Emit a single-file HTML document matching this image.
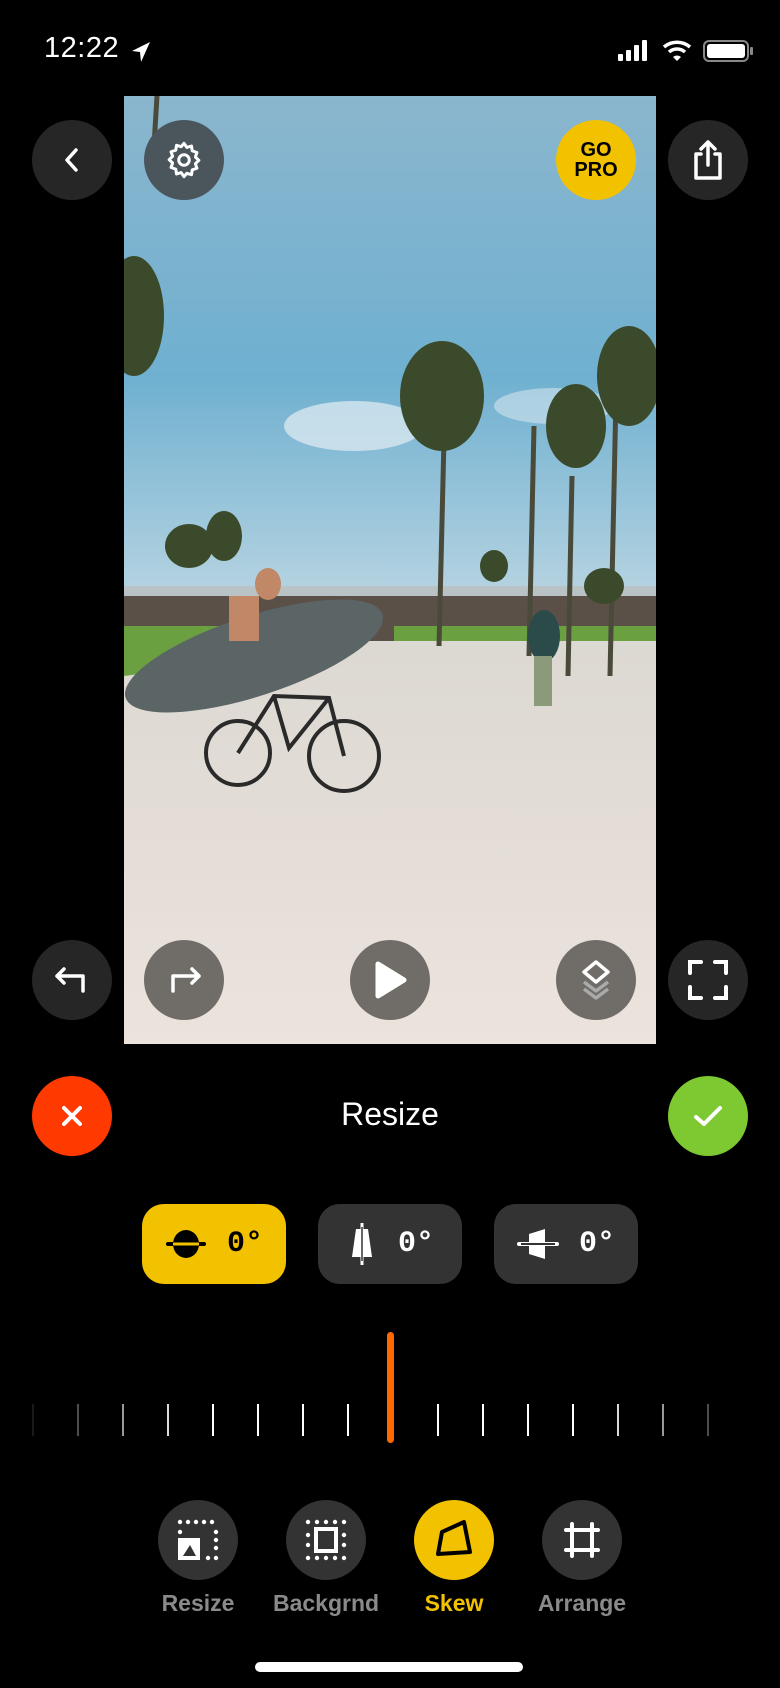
<!DOCTYPE html>
<html><head><meta charset="utf-8">
<style>
*{margin:0;padding:0;box-sizing:border-box}
body{width:780px;height:1688px;background:#000;position:relative;overflow:hidden;font-family:"Liberation Sans",sans-serif;color:#fff}
.abs{position:absolute}
.btn{position:absolute;width:80px;height:80px;border-radius:50%;display:flex;align-items:center;justify-content:center}
.dark{background:#262626}
.glass{background:rgba(70,70,70,.75)}
.pill{position:absolute;top:1204px;width:144px;height:80px;border-radius:22px;background:#333;display:flex;align-items:center;justify-content:center;gap:20px;font-family:"Liberation Mono",monospace;font-weight:bold;font-size:30px;color:#fff}
.tick{position:absolute;top:1404px;width:2px;height:32px;background:#fff}
.tool{position:absolute;top:1500px;width:80px;height:80px;border-radius:50%;background:#333;display:flex;align-items:center;justify-content:center}
.lbl{position:absolute;top:1590px;width:140px;text-align:center;font-size:23px;font-weight:bold;color:#8a8a8a}
</style></head><body>

<div class="abs" style="left:44px;top:32px;font-size:29px;font-weight:500;letter-spacing:0.5px">12:22</div>
<svg class="abs" style="left:130px;top:40px" width="22" height="24" viewBox="0 0 22 24"><path d="M20 2 L2 11 L10 12 L11 22 Z" fill="#fff"/></svg>
<svg class="abs" style="left:616px;top:38px" width="140" height="26" viewBox="0 0 140 26">
<rect x="2" y="16" width="5" height="7" rx="1" fill="#fff"/><rect x="10" y="12" width="5" height="11" rx="1" fill="#fff"/><rect x="18" y="7" width="5" height="16" rx="1" fill="#fff"/><rect x="26" y="2" width="5" height="21" rx="1" fill="#fff"/>
<path d="M48 9 A20 20 0 0 1 74 9" stroke="#fff" stroke-width="3.5" fill="none"/><path d="M53 14 A12 12 0 0 1 69 14" stroke="#fff" stroke-width="3.5" fill="none"/><path d="M57 19 L61 23 L65 19 A6 6 0 0 0 57 19Z" fill="#fff"/>
<rect x="88" y="3" width="44" height="20" rx="5" stroke="#888" stroke-width="2" fill="none"/><rect x="91" y="6" width="38" height="14" rx="3" fill="#fff"/><rect x="134" y="9" width="3" height="8" rx="1" fill="#888"/>
</svg>

<svg class="abs" style="left:124px;top:96px" width="532" height="948" viewBox="0 0 532 948">
<defs>
<linearGradient id="sky" x1="0" y1="0" x2="0" y2="1"><stop offset="0" stop-color="#8bb6cd"/><stop offset=".5" stop-color="#6fb0d0"/><stop offset="1" stop-color="#c9dde6"/></linearGradient>
<linearGradient id="gr" x1="0" y1="0" x2="0" y2="1"><stop offset="0" stop-color="#dcd8d2"/><stop offset="1" stop-color="#ece3dc"/></linearGradient>
</defs>
<rect width="532" height="560" fill="url(#sky)"/>
<ellipse cx="230" cy="330" rx="70" ry="25" fill="#e4eef3" opacity=".7"/>
<ellipse cx="430" cy="310" rx="60" ry="18" fill="#e4eef3" opacity=".5"/>
<rect y="490" width="532" height="50" fill="#b9c3c6"/>
<rect y="500" width="532" height="45" fill="#5a5048"/>
<rect x="270" y="530" width="262" height="30" fill="#6aa040"/>
<rect y="545" width="532" height="403" fill="url(#gr)"/>
<path d="M0 530 L140 530 L150 560 L0 580Z" fill="#6aa040"/>
<g stroke="#4a4a3a" stroke-width="5" fill="none"><path d="M322 260 L315 550"/><path d="M448 380 L444 580"/><path d="M410 330 L405 560"/><path d="M492 300 L486 580"/><path d="M33 0 L30 50"/></g>
<g fill="#3c4a2c"><ellipse cx="318" cy="300" rx="42" ry="55"/><ellipse cx="452" cy="330" rx="30" ry="42"/><ellipse cx="505" cy="280" rx="32" ry="50"/><ellipse cx="10" cy="220" rx="30" ry="60"/><ellipse cx="65" cy="450" rx="24" ry="22"/><ellipse cx="100" cy="440" rx="18" ry="25"/><ellipse cx="370" cy="470" rx="14" ry="16"/><ellipse cx="480" cy="490" rx="20" ry="18"/></g>
<ellipse cx="130" cy="560" rx="135" ry="40" transform="rotate(-18 130 560)" fill="#5c6566"/>
<ellipse cx="144" cy="488" rx="13" ry="16" fill="#c08866"/>
<rect x="105" y="500" width="30" height="45" fill="#c08866"/>
<g stroke="#2a2a2a" stroke-width="4" fill="none"><circle cx="114" cy="657" r="32"/><circle cx="220" cy="660" r="35"/><path d="M114 657 L150 600 L205 602 L220 660 M150 600 L165 652 L205 602"/></g>
<ellipse cx="420" cy="540" rx="16" ry="26" fill="#2b4a4a"/><rect x="410" y="560" width="18" height="50" fill="#8a9a7a"/>
</svg>

<div class="btn dark" style="left:32px;top:120px"><svg width="30" height="30" viewBox="0 0 30 30"><path d="M19 5 L10 15 L19 25" stroke="#fff" stroke-width="3.5" fill="none" stroke-linecap="round" stroke-linejoin="round"/></svg></div>
<div class="btn glass" style="left:144px;top:120px;background:#4a565c"><svg width="42" height="42" viewBox="0 0 24 24"><path d="M12 2.5l1.6 2.3 2.7-.8.4 2.8 2.7.9-.9 2.6 2 1.9-2 1.9.9 2.6-2.7.9-.4 2.8-2.7-.8L12 21.5l-1.6-2.3-2.7.8-.4-2.8-2.7-.9.9-2.6-2-1.9 2-1.9-.9-2.6 2.7-.9.4-2.8 2.7.8z" stroke="#fff" stroke-width="1.7" fill="none" stroke-linejoin="round"/><circle cx="12" cy="12" r="3" stroke="#fff" stroke-width="1.7" fill="none"/></svg></div>
<div class="btn" style="left:556px;top:120px;background:#f2c200;flex-direction:column;color:#000;font-weight:bold;font-size:20px;line-height:20px;text-align:center">GO<br>PRO</div>
<div class="btn dark" style="left:668px;top:120px"><svg width="40" height="44" viewBox="0 0 40 44"><path d="M13 16 H8 V40 H32 V16 H27 M20 4 V27 M13 11 L20 4 L27 11" stroke="#fff" stroke-width="3.5" fill="none" stroke-linecap="round" stroke-linejoin="round"/></svg></div>

<div class="btn dark" style="left:32px;top:940px"><svg width="36" height="30" viewBox="0 0 36 30"><path d="M10 4 L3 11 L10 18 M3 11 H29 V26" stroke="#fff" stroke-width="3.5" fill="none" stroke-linecap="round" stroke-linejoin="round"/></svg></div>
<div class="btn" style="left:144px;top:940px;background:rgba(90,88,85,.85)"><svg width="36" height="30" viewBox="0 0 36 30"><path d="M26 4 L33 11 L26 18 M33 11 H7 V26" stroke="#fff" stroke-width="3.5" fill="none" stroke-linecap="round" stroke-linejoin="round"/></svg></div>
<div class="btn" style="left:350px;top:940px;background:rgba(90,88,85,.85)"><svg width="36" height="40" viewBox="0 0 36 40"><path d="M6 4 L32 20 L6 36 Z" fill="#fff" stroke="#fff" stroke-width="5" stroke-linejoin="round"/></svg></div>
<div class="btn" style="left:556px;top:940px;background:rgba(90,88,85,.85)"><svg width="40" height="44" viewBox="0 0 40 44"><path d="M20 4 L32 14 L20 24 L8 14 Z" stroke="#fff" stroke-width="3.5" fill="none" stroke-linejoin="round"/><path d="M8 24 L20 33 L32 24 M8 31 L20 40 L32 31" stroke="#aaa" stroke-width="3.5" fill="none" stroke-linejoin="round"/></svg></div>
<div class="btn dark" style="left:668px;top:940px"><svg width="42" height="42" viewBox="0 0 42 42"><path d="M3 14 V3 H14 M28 3 H39 V14 M39 28 V39 H28 M14 39 H3 V28" stroke="#fff" stroke-width="4" fill="none" stroke-linecap="round"/></svg></div>

<div class="btn" style="left:32px;top:1076px;background:#ff3a00"><svg width="26" height="26" viewBox="0 0 26 26"><path d="M5 5 L21 21 M21 5 L5 21" stroke="#fff" stroke-width="4" stroke-linecap="round"/></svg></div>
<div class="abs" style="left:290px;top:1096px;width:200px;text-align:center;font-size:32px">Resize</div>
<div class="btn" style="left:668px;top:1076px;background:#7ec832"><svg width="32" height="26" viewBox="0 0 32 26"><path d="M4 14 L12 21 L28 5" stroke="#fff" stroke-width="4" fill="none" stroke-linecap="round" stroke-linejoin="round"/></svg></div>

<div class="pill" style="left:142px;background:#f2c200;color:#000"><svg width="42" height="30" viewBox="0 0 42 30"><ellipse cx="21" cy="15" rx="13" ry="14" fill="#000"/><rect x="1" y="13" width="40" height="4" rx="2" fill="#000"/><rect x="8" y="13.5" width="26" height="3" fill="#f2c200"/></svg><span>0°</span></div>
<div class="pill" style="left:318px"><svg width="32" height="42" viewBox="0 0 32 42"><path d="M10 6 H22 L26 34 H6 Z" fill="#fff"/><rect x="14.5" y="0" width="3" height="42" fill="#fff"/><rect x="15.25" y="4" width="1.5" height="34" fill="#333"/></svg><span>0°</span></div>
<div class="pill" style="left:494px"><svg width="42" height="32" viewBox="0 0 42 32"><path d="M12 6 L28 1 V31 L12 26 Z" fill="#fff"/><rect x="0" y="14" width="42" height="4" rx="2" fill="#fff"/><rect x="4" y="15" width="34" height="2" fill="#333"/></svg><span>0°</span></div>

<div class="tick" style="left:32px;opacity:.1"></div>
<div class="tick" style="left:77px;opacity:.3"></div>
<div class="tick" style="left:122px;opacity:.6"></div>
<div class="tick" style="left:167px;opacity:.85"></div>
<div class="tick" style="left:212px"></div><div class="tick" style="left:257px"></div><div class="tick" style="left:302px"></div><div class="tick" style="left:347px"></div>
<div class="tick" style="left:437px"></div><div class="tick" style="left:482px"></div><div class="tick" style="left:527px"></div><div class="tick" style="left:572px"></div>
<div class="tick" style="left:617px;opacity:.85"></div>
<div class="tick" style="left:662px;opacity:.6"></div>
<div class="tick" style="left:707px;opacity:.3"></div>
<div class="abs" style="left:387px;top:1332px;width:7px;height:111px;border-radius:4px;background:#ff6a00"></div>

<div class="tool" style="left:158px"><svg width="44" height="44" viewBox="0 0 44 44"><g fill="#fff"><circle cx="4" cy="4" r="2.2"/><circle cx="12" cy="4" r="2.2"/><circle cx="20" cy="4" r="2.2"/><circle cx="28" cy="4" r="2.2"/><circle cx="36" cy="4" r="2.2"/><circle cx="40" cy="14" r="2.2"/><circle cx="40" cy="22" r="2.2"/><circle cx="40" cy="30" r="2.2"/><circle cx="40" cy="40" r="2.2"/><circle cx="32" cy="40" r="2.2"/><circle cx="4" cy="14" r="2.2"/></g><rect x="2" y="20" width="22" height="22" fill="#fff"/><path d="M7 38 L14 27 L20 38Z" fill="#333"/></svg></div>
<div class="lbl" style="left:128px">Resize</div>
<div class="tool" style="left:286px"><svg width="44" height="44" viewBox="0 0 44 44"><g fill="#fff"><circle cx="4" cy="4" r="2.2"/><circle cx="13" cy="4" r="2.2"/><circle cx="22" cy="4" r="2.2"/><circle cx="31" cy="4" r="2.2"/><circle cx="40" cy="4" r="2.2"/><circle cx="4" cy="40" r="2.2"/><circle cx="13" cy="40" r="2.2"/><circle cx="22" cy="40" r="2.2"/><circle cx="31" cy="40" r="2.2"/><circle cx="40" cy="40" r="2.2"/><circle cx="4" cy="17" r="2.2"/><circle cx="4" cy="27" r="2.2"/><circle cx="40" cy="17" r="2.2"/><circle cx="40" cy="27" r="2.2"/></g><rect x="12" y="11" width="20" height="22" stroke="#fff" stroke-width="4" fill="none"/></svg></div>
<div class="lbl" style="left:256px">Backgrnd</div>
<div class="tool" style="left:414px;background:#f2c200"><svg width="44" height="44" viewBox="0 0 44 44"><path d="M10 14 L32 4 L38 34 L6 36 Z" stroke="#000" stroke-width="4" fill="none" stroke-linejoin="round"/></svg></div>
<div class="lbl" style="left:384px;color:#f2c200">Skew</div>
<div class="tool" style="left:542px"><svg width="36" height="36" viewBox="0 0 36 36"><path d="M8 2 V34 M28 2 V34 M2 8 H34 M2 28 H34" stroke="#fff" stroke-width="4" stroke-linecap="round"/></svg></div>
<div class="lbl" style="left:512px">Arrange</div>

<div class="abs" style="left:255px;top:1662px;width:268px;height:10px;border-radius:5px;background:#fff"></div>
</body></html>
